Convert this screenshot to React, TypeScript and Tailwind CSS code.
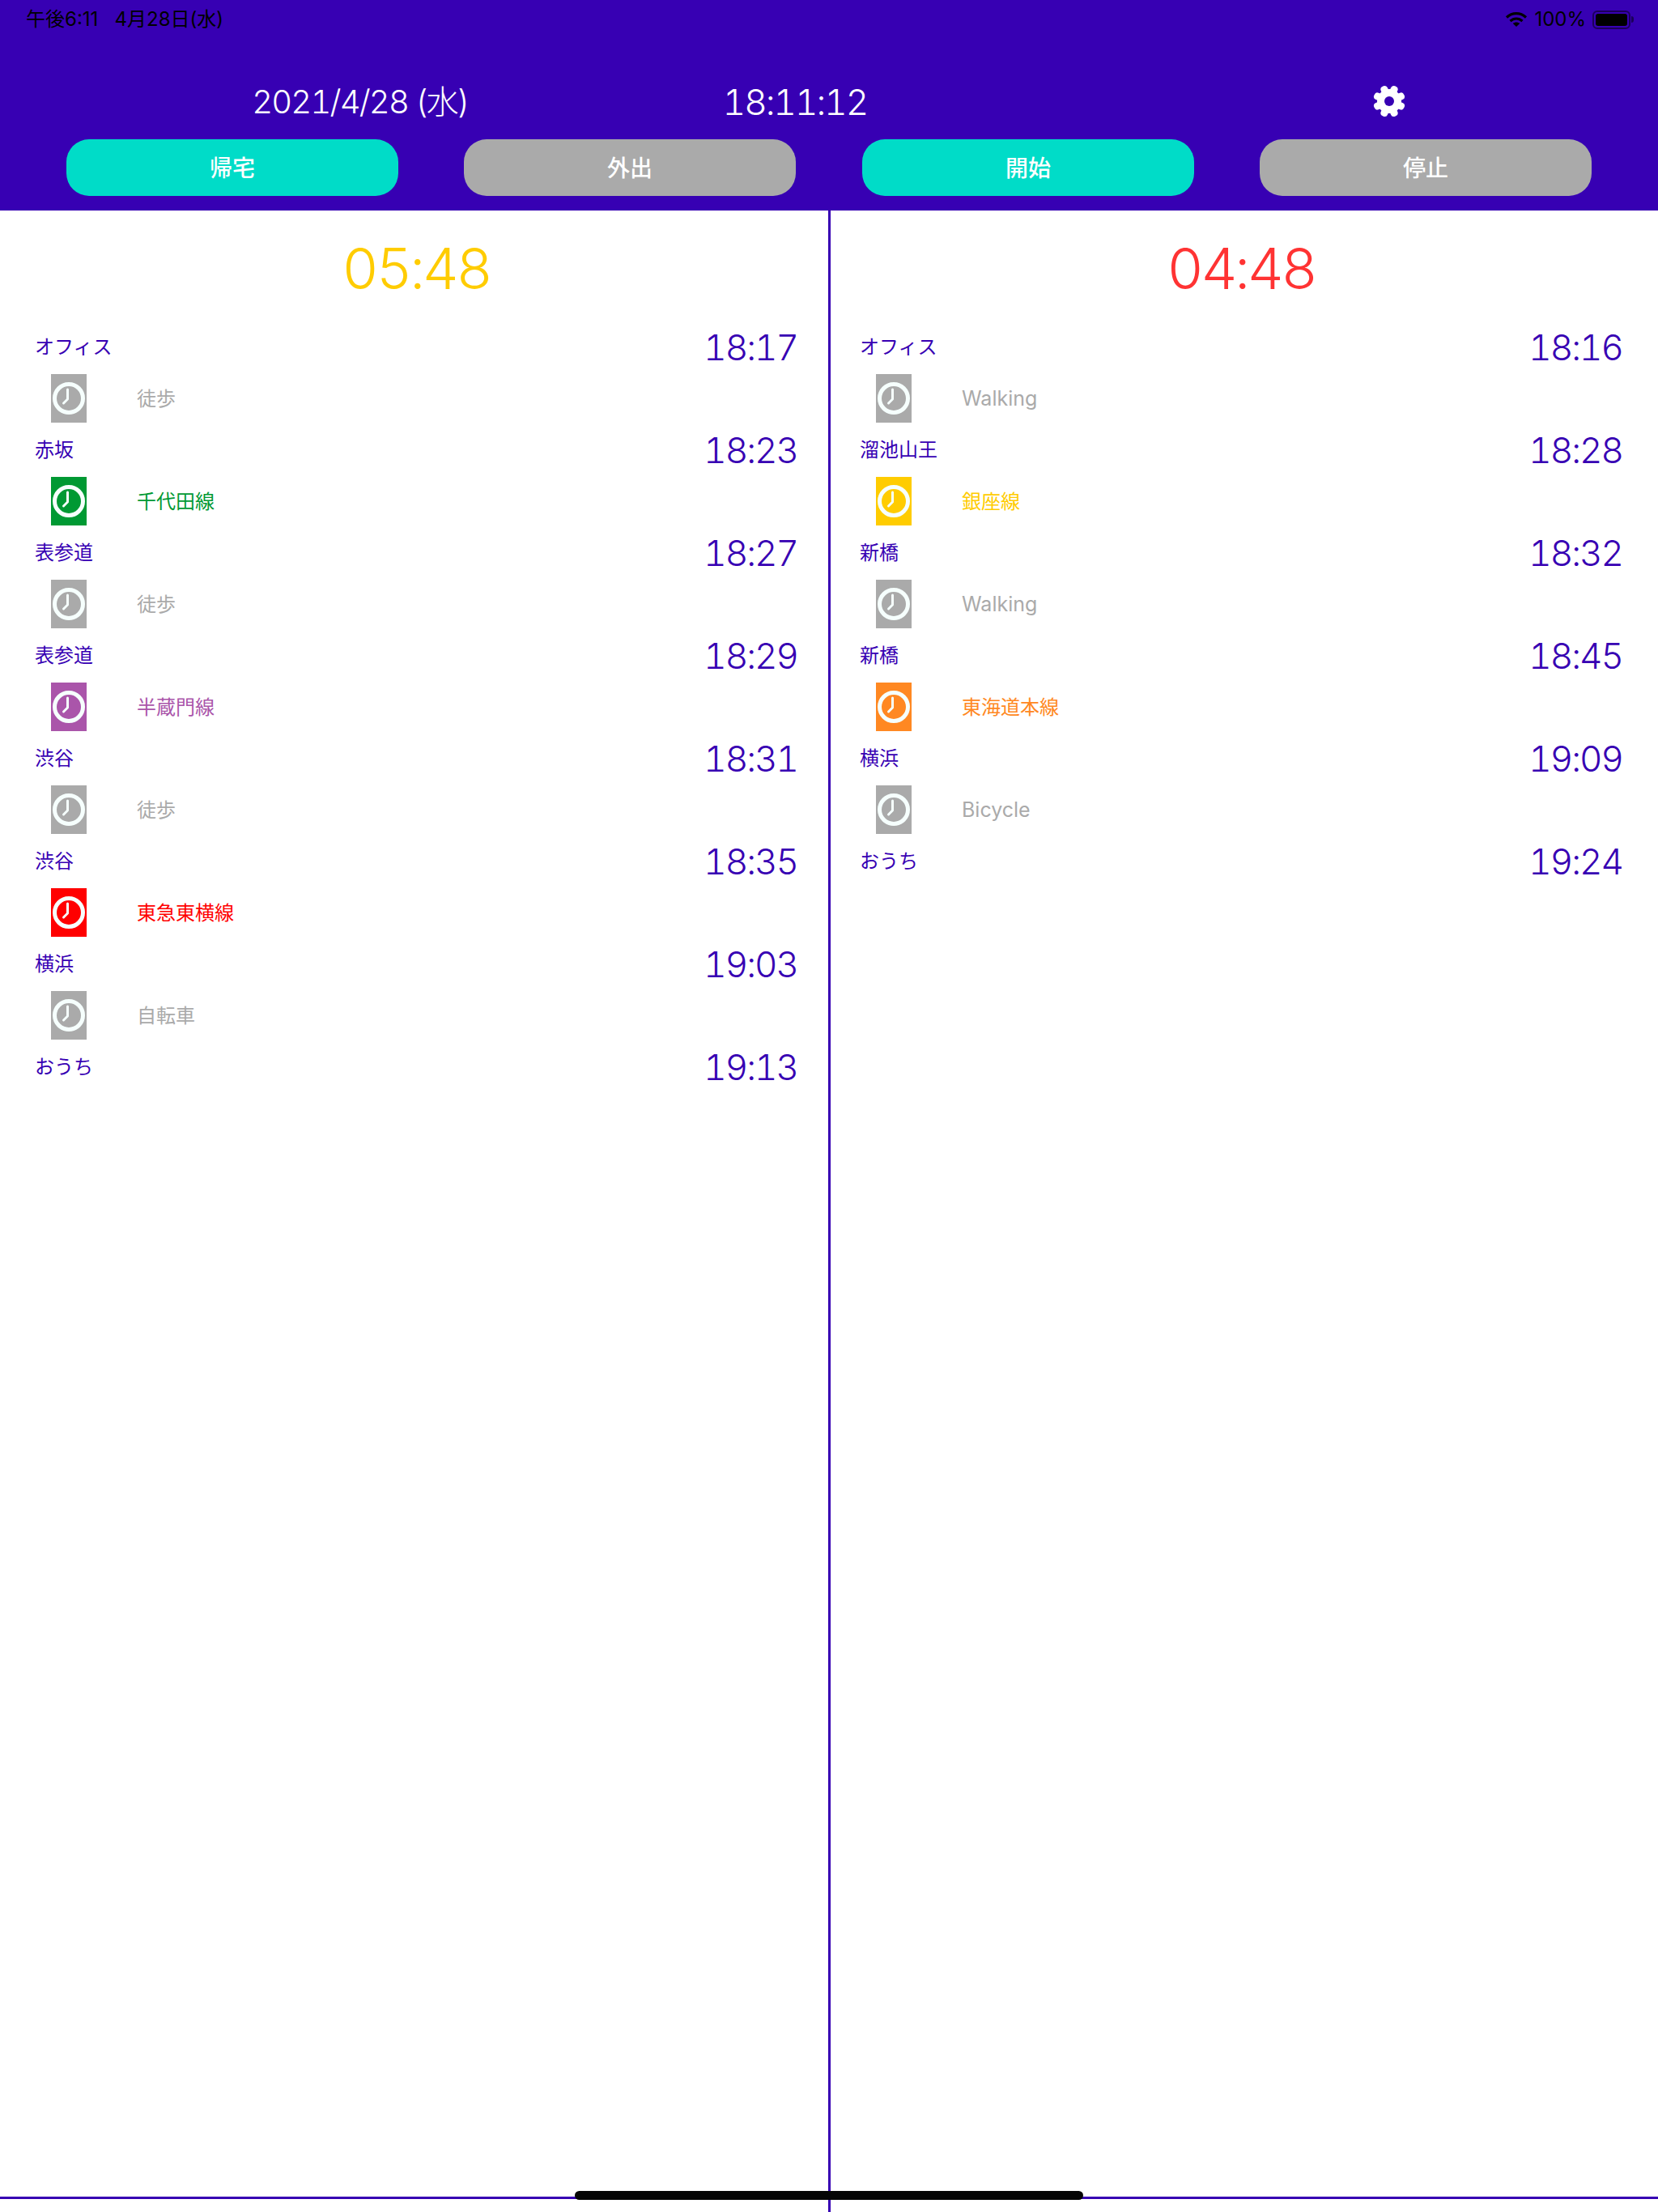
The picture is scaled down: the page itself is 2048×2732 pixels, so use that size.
import React from 'react';

interface Leg {
  station: string;
  time: string;
  line?: string;
  color?: string;
}

const PURPLE = '#3700b3';

const HOME_LEGS: Leg[] = [
  { station: 'オフィス', time: '18:17', line: '徒歩' },
  { station: '赤坂', time: '18:23', line: '千代田線', color: 'green' },
  { station: '表参道', time: '18:27', line: '徒歩' },
  { station: '表参道', time: '18:29', line: '半蔵門線', color: 'violet' },
  { station: '渋谷', time: '18:31', line: '徒歩' },
  { station: '渋谷', time: '18:35', line: '東急東横線', color: 'red' },
  { station: '横浜', time: '19:03', line: '自転車' },
  { station: 'おうち', time: '19:13' },
];

const OUT_LEGS: Leg[] = [
  { station: 'オフィス', time: '18:16', line: 'Walking' },
  { station: '溜池山王', time: '18:28', line: '銀座線', color: 'yellow' },
  { station: '新橋', time: '18:32', line: 'Walking' },
  { station: '新橋', time: '18:45', line: '東海道本線', color: 'orange' },
  { station: '横浜', time: '19:09', line: 'Bicycle' },
  { station: 'おうち', time: '19:24' },
];

const BG: Record<string, string> = {
  gray: 'bg-[#aaaaaa]',
  green: 'bg-[#009933]',
  violet: 'bg-[#aa55aa]',
  red: 'bg-[#ff0000]',
  yellow: 'bg-[#ffcc00]',
  orange: 'bg-[#ff8822]',
};

const TEXT: Record<string, string> = {
  gray: 'text-[#aaaaaa]',
  green: 'text-[#009933]',
  violet: 'text-[#aa55aa]',
  red: 'text-[#ff0000]',
  yellow: 'text-[#ffcc00]',
  orange: 'text-[#ff8822]',
};

const ClockIcon = () => (
  <svg width="44" height="60" viewBox="0 0 44 60" fill="none">
    <circle cx="22" cy="30" r="17.5" stroke="#f6fffd" strokeWidth="5" />
    <path d="M20.5 19V31L15.5 36" stroke="#f6fffd" strokeWidth="3" strokeLinecap="round" strokeLinejoin="round" />
  </svg>
);

const GearIcon = () => (
  <svg width="40" height="40" viewBox="0 0 40 40" fill="#fff">
    {[22.5, 67.5, 112.5, 157.5, 202.5, 247.5, 292.5, 337.5].map(a => (
      <rect key={a} x="15.5" y="0" width="9" height="12" rx="4" transform={`rotate(${a} 20 20)`} />
    ))}
    <circle cx="20" cy="20" r="15" />
    <circle cx="20" cy="20" r="6" fill={PURPLE} />
  </svg>
);

const WifiIcon = () => (
  <svg width="28" height="20" viewBox="0 0 28 20" fill="none" stroke="#000" strokeWidth="3.2">
    <path d="M2 7.5C9 1 19 1 26 7.5" />
    <path d="M6.5 12C11 8 17 8 21.5 12" />
    <path d="M14 19L9.8 15C12.3 13 15.7 13 18.2 15Z" fill="#000" stroke="none" />
  </svg>
);

const BatteryIcon = () => (
  <div className="flex items-center">
    <div className="w-[47px] h-[23px] rounded-[6px] border-2 border-[#000000]/50 p-[2px]">
      <div className="w-full h-full rounded-[3px] bg-black" />
    </div>
    <div className="w-[3px] h-[8px] ml-[1px] rounded-r-full bg-black/50" />
  </div>
);

const Route = ({ total, totalColor, legs, className }: { total: string; totalColor: string; legs: Leg[]; className: string }) => (
  <div className={className}>
    <div className="h-[135px] pt-[30px] text-center text-[70px] leading-[84px] font-light tabular-nums tracking-[-3.4px]" style={{ color: totalColor }}>
      {total}
    </div>
    {legs.map((leg, i) => {
      const color = leg.color ?? 'gray';
      const latin = /[a-z]/i.test(leg.line ?? '');
      return (
        <div key={i}>
          <div className="h-[67px] flex justify-between items-center">
            <span className="text-[24px] leading-none text-[#3700b3]">{leg.station}</span>
            <span className="text-[44px] leading-none font-light tabular-nums tracking-[-2px] text-[#3700b3]">{leg.time}</span>
          </div>
          {leg.line && (
            <div className="h-[60px] flex items-center">
              <div className={`ml-[20px] w-[44px] h-[60px] ${BG[color]}`}>
                <ClockIcon />
              </div>
              <span className={`ml-[62px] pt-[1px] leading-none ${latin ? 'text-[25px]' : 'text-[24px]'} ${TEXT[color]}`}>{leg.line}</span>
            </div>
          )}
        </div>
      );
    })}
  </div>
);

const ActionButton = ({ label, active }: { label: string; active?: boolean }) => (
  <button className={`w-[410px] h-[70px] pt-[2px] rounded-[28px] text-white text-[28px] font-medium flex items-center justify-center ${active ? 'bg-[#00dcc8]' : 'bg-[#aaaaaa]'}`}>
    {label}
  </button>
);

export default function App() {
  return (
    <div className="relative w-[2048px] h-[2732px] overflow-hidden bg-white flex flex-col font-['Inter','Noto_Sans_CJK_JP',sans-serif]">
      <header className="h-[260px] shrink-0 bg-[#3700b3]">
        <div className="h-[48px] pl-[32px] pr-[30px] flex justify-between items-center text-black text-[24px] leading-none">
          <span className="whitespace-pre">午後6:11   4月28日(水)</span>
          <div className="flex items-center gap-[8px]">
            <WifiIcon />
            <span>100%</span>
            <BatteryIcon />
          </div>
        </div>
        <div className="h-[124px] pt-[54px] flex items-start text-white leading-[48px] font-light tabular-nums">
          <div className="w-[890px] text-center text-[40px] tracking-[-1.8px]">2021/4/28 (水)</div>
          <div className="w-[184px] text-center text-[44px] tracking-[-2px]">18:11:12</div>
          <div className="ml-[622px] mt-[3px]">
            <GearIcon />
          </div>
        </div>
        <div className="flex">
          <div className="w-[1024px] pl-[82px] flex gap-[81px]">
            <ActionButton label="帰宅" active />
            <ActionButton label="外出" />
          </div>
          <div className="pl-[41px] flex gap-[81px]">
            <ActionButton label="開始" active />
            <ActionButton label="停止" />
          </div>
        </div>
      </header>
      <main className="flex-1 flex">
        <Route total="05:48" totalColor="#ffcc00" legs={HOME_LEGS} className="w-[1026px] pl-[43px] pr-[38px] border-r-[3px] border-[#3700b3]" />
        <Route total="04:48" totalColor="#ff3333" legs={OUT_LEGS} className="flex-1 pl-[36px] pr-[44px]" />
      </main>
      <div className="absolute left-0 right-0 bottom-[16px] h-[3px] bg-[#3700b3]" />
      <div className="absolute left-[710px] bottom-[15px] w-[628px] h-[11px] rounded-full bg-[#050505]" />
    </div>
  );
}
